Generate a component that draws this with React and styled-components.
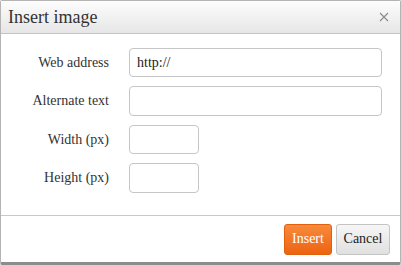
import styled, { createGlobalStyle } from "styled-components";

const Global = createGlobalStyle`
  html, body {
    margin: 0;
    padding: 0;
    background: #ffffff;
  }
  * {
    box-sizing: border-box;
  }
`;

// 대화상자 박스
const Dialog = styled.div`
  width: 401px;
  height: 265px;
  display: flex;
  flex-direction: column;
  background: #ffffff;
  border: 1px solid #b4b4b4;
  border-bottom: 3px solid #8c8c8c;
  border-radius: 2px;
  font-family: "Liberation Serif", "Times New Roman", serif;
  color: #222222;
`;

const Header = styled.div`
  height: 33px;
  display: flex;
  align-items: center;
  justify-content: space-between;
  padding: 0 9px 0 7px;
  background: linear-gradient(#fdfdfd, #e6e6e6);
  border-bottom: 1px solid #c4c4c4;
`;

const Title = styled.div`
  font-size: 18px;
  color: #333333;
`;

const Close = styled.button`
  width: 14px;
  height: 14px;
  padding: 0;
  border: none;
  background: none;
  display: flex;
  align-items: center;
  justify-content: center;
  cursor: pointer;
`;

const Body = styled.div`
  flex: 1;
  display: grid;
  grid-template-columns: 108px auto;
  column-gap: 20px;
  row-gap: 9px;
  align-content: start;
  padding: 14px 18px 0 0;
  border-bottom: 1px solid #c8c8c8;
`;

const Label = styled.label`
  font-size: 14px;
  text-align: right;
  align-self: center;
  color: #333333;
`;

const Input = styled.input`
  width: ${(p) => (p.$short ? "70px" : "253px")};
  height: ${(p) => (p.$tall ? "30px" : "29px")};
  padding: 0 7px;
  font-family: "Liberation Serif", "Times New Roman", serif;
  font-size: 14px;
  color: #222222;
  border: 1px solid #c6c6c6;
  border-radius: 4px;
  outline: none;
`;

const Footer = styled.div`
  height: 46px;
  display: flex;
  justify-content: flex-end;
  align-items: center;
  gap: 4px;
  padding: 0 10px 0 0;
`;

const Button = styled.button`
  width: ${(p) => (p.$primary ? "48px" : "54px")};
  height: 31px;
  padding: 0;
  font-family: "Liberation Serif", "Times New Roman", serif;
  font-size: 14px;
  border-radius: 3px;
  cursor: pointer;
  color: ${(p) => (p.$primary ? "#ffffff" : "#222222")};
  border: 1px solid ${(p) => (p.$primary ? "#e0600e" : "#c4c4c4")};
  background: ${(p) =>
    p.$primary
      ? "linear-gradient(#f98a3c, #ec6311)"
      : "linear-gradient(#f6f6f6, #e0e0e0)"};
`;

export default function App() {
  return (
    <>
      <Global />
      <Dialog>
        <Header>
          <Title>Insert image</Title>
          <Close aria-label="close">
            <svg width="10" height="10" viewBox="0 0 10 10">
              <path d="M1 1L9 9M9 1L1 9" stroke="#8a8a8a" strokeWidth="1.1" />
            </svg>
          </Close>
        </Header>
        <Body>
          <Label>Web address</Label>
          <Input defaultValue="http://" />
          <Label>Alternate text</Label>
          <Input $tall />
          <Label>Width (px)</Label>
          <Input $short />
          <Label>Height (px)</Label>
          <Input $short $tall />
        </Body>
        <Footer>
          <Button $primary>Insert</Button>
          <Button>Cancel</Button>
        </Footer>
      </Dialog>
    </>
  );
}
